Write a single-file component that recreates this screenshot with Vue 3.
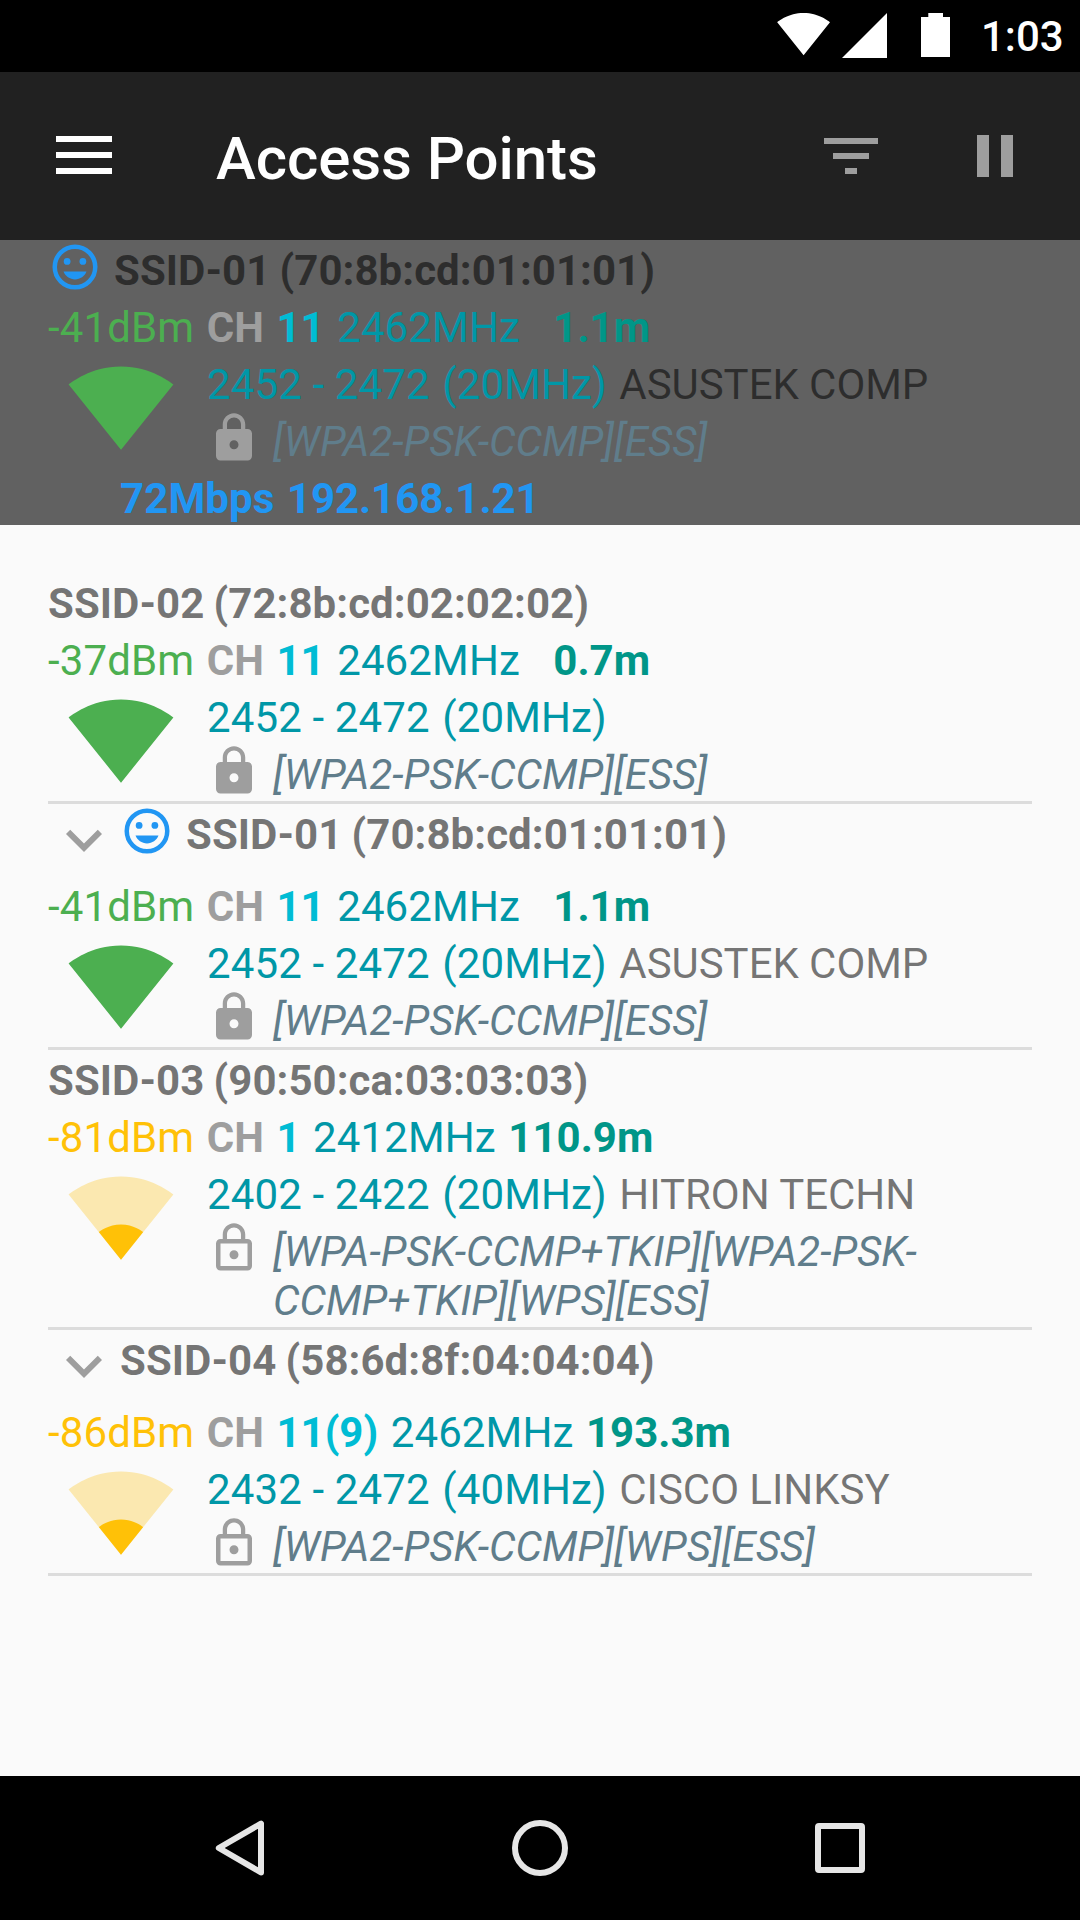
<script setup>
const connected = {
  ssid: 'SSID-01 (70:8b:cd:01:01:01)', mood: true, level: '-41dBm', tone: 'strong',
  channel: '11', freq: '2462MHz', distance: '  1.1m', range: '2452 - 2472', width: '(20MHz)',
  vendor: 'ASUSTEK COMP', caps: '[WPA2-PSK-CCMP][ESS]', locked: true, speed: '72Mbps', ip: '192.168.1.21',
}

const points = [
  {
    ssid: 'SSID-02 (72:8b:cd:02:02:02)', level: '-37dBm', tone: 'strong',
    channel: '11', freq: '2462MHz', distance: '  0.7m', range: '2452 - 2472', width: '(20MHz)',
    vendor: '', caps: '[WPA2-PSK-CCMP][ESS]', locked: true,
  },
  { ...connected, speed: '', ip: '', group: true },
  {
    ssid: 'SSID-03 (90:50:ca:03:03:03)', level: '-81dBm', tone: 'weak',
    channel: '1', freq: '2412MHz', distance: '110.9m', range: '2402 - 2422', width: '(20MHz)',
    vendor: 'HITRON TECHN', caps: '[WPA-PSK-CCMP+TKIP][WPA2-PSK-CCMP+TKIP][WPS][ESS]', locked: false,
  },
  {
    ssid: 'SSID-04 (58:6d:8f:04:04:04)', group: true, level: '-86dBm', tone: 'weak',
    channel: '11(9)', freq: '2462MHz', distance: '193.3m', range: '2432 - 2472', width: '(40MHz)',
    vendor: 'CISCO LINKSY', caps: '[WPA2-PSK-CCMP][WPS][ESS]', locked: false,
  },
]

const sections = [
  { name: 'connected', items: [connected] },
  { name: 'list', items: points },
]

const fan = 'M12.01 21.49L23.64 7c-.45-.34-4.93-4-11.64-4C5.28 3 .81 6.66.36 7l11.63 14.49.01.01.01-.01z'
const lockFull = 'M18 8h-1V6c0-2.76-2.24-5-5-5S7 3.24 7 6v2H6c-1.1 0-2 .9-2 2v10c0 1.1.9 2 2 2h12c1.1 0 2-.9 2-2V10c0-1.1-.9-2-2-2zm-6 9c-1.1 0-2-.9-2-2s.9-2 2-2 2 .9 2 2-.9 2-2 2zm3.1-9H8.9V6c0-1.71 1.39-3.1 3.1-3.1s3.1 1.39 3.1 3.1v2z'
const lockOutline = 'M12 17c1.1 0 2-.9 2-2s-.9-2-2-2-2 .9-2 2 .9 2 2 2zm6-9h-1V6c0-2.76-2.24-5-5-5S7 3.24 7 6v2H6c-1.1 0-2 .9-2 2v10c0 1.1.9 2 2 2h12c1.1 0 2-.9 2-2V10c0-1.1-.9-2-2-2zM8.9 6c0-1.71 1.39-3.1 3.1-3.1s3.1 1.39 3.1 3.1v2H8.9V6zM18 20H6V10h12v10z'
</script>

<template>
  <div class="screen">
    <header class="status">
      <svg class="s-wifi" viewBox="0 0 54 44"><path d="M26.6 43.2L53 10.2C51.9 9.4 41.8 1 26.6 1S1.3 9.4.2 10.2z" fill="#fff" /></svg>
      <svg class="s-cell" viewBox="0 0 45 45"><path d="M0 45H45V0z" fill="#fff" /></svg>
      <svg class="s-batt" viewBox="0 0 29 44"><path d="M7.3 0H22V4H29V44H0V4H7.3z" fill="#fff" /></svg>
      <span class="clock">1:03</span>
    </header>

    <div class="toolbar">
      <svg class="menu" viewBox="0 0 56 38"><path d="M0 0h56v6H0zM0 16h56v6H0zM0 32h56v6H0z" fill="#fff" /></svg>
      <h1>Access Points</h1>
      <svg class="filter" viewBox="0 0 54 36"><path d="M0 0h54v6H0zM9 15h36v6H9zM21 30h12v6H21z" fill="#9e9e9e" /></svg>
      <svg class="pause" viewBox="0 0 36 42"><path d="M0 0h12v42H0zM24 0h12v42H24z" fill="#9e9e9e" /></svg>
    </div>

    <main>
      <section v-for="s in sections" :key="s.name" :class="s.name">
        <article v-for="ap in s.items" :key="ap.ssid" class="ap">
          <div class="title" :class="{ group: ap.group }">
            <svg v-if="ap.group" class="chevron" viewBox="0 0 24 24"><path d="M16.59 8.59L12 13.17 7.41 8.59 6 10l6 6 6-6z" fill="#9e9e9e" /></svg>
            <svg v-if="ap.mood" class="mood" viewBox="0 0 24 24">
              <circle cx="12" cy="12" r="9" fill="none" stroke="#2196f3" stroke-width="2" />
              <circle cx="8.5" cy="9.5" r="1.5" fill="#2196f3" />
              <circle cx="15.5" cy="9.5" r="1.5" fill="#2196f3" />
              <path d="M12 17.5c2.33 0 4.31-1.46 5.11-3.5H6.89c.8 2.04 2.78 3.5 5.11 3.5z" fill="#2196f3" />
            </svg>
            <b class="txt ssid">{{ ap.ssid }}</b>
          </div>
          <div class="signal">
            <span class="txt level" :class="ap.tone">{{ ap.level }}</span>
            <b class="txt ch">CH</b>
            <b class="txt channel">{{ ap.channel }}</b>
            <span class="txt freq">{{ ap.freq }}</span>
            <b class="txt distance">{{ ap.distance }}</b>
          </div>
          <div class="detail">
            <svg class="fan" :class="ap.tone" viewBox="0 0 24 24">
              <path :d="fan" fill="currentColor" :fill-opacity="ap.tone === 'weak' ? 0.3 : 1" />
              <path v-if="ap.tone === 'weak'" d="M7.07 15.36L12 21.5l4.93-6.14C16.66 15.15 14.8 13.67 12 13.67s-4.66 1.48-4.93 1.69z" fill="currentColor" />
            </svg>
            <div class="info">
              <div class="range">
                <span class="txt freq">{{ ap.range }}</span>
                <span class="txt freq">{{ ap.width }}</span>
                <span v-if="ap.vendor" class="txt vendor">{{ ap.vendor }}</span>
              </div>
              <div class="security">
                <svg class="lock" viewBox="0 0 24 24"><path :d="ap.locked ? lockFull : lockOutline" fill="#9e9e9e" /></svg>
                <i class="txt caps">{{ ap.caps }}</i>
              </div>
            </div>
          </div>
          <div v-if="ap.ip" class="link">
            <b class="txt speed">{{ ap.speed }}</b>
            <b class="txt ip">{{ ap.ip }}</b>
          </div>
        </article>
      </section>
    </main>

    <nav>
      <svg viewBox="0 0 56 56"><path d="M49 3.6V52.4L6.8 28z" fill="none" stroke="#e6e6e6" stroke-width="6" stroke-linejoin="round" /></svg>
      <svg viewBox="0 0 56 56"><circle cx="28" cy="28" r="25" fill="none" stroke="#e6e6e6" stroke-width="6" /></svg>
      <svg viewBox="0 0 56 56"><rect x="6" y="6" width="44" height="44" rx="1" fill="none" stroke="#e6e6e6" stroke-width="6" stroke-linejoin="round" /></svg>
    </nav>
  </div>
</template>

<style>
body { margin: 0; background: #000; }
</style>

<style scoped>
.screen {
  width: 1080px;
  height: 1920px;
  display: flex;
  flex-direction: column;
  background: #fafafa;
  font-family: Roboto, "Noto Sans", sans-serif;
  font-size: 42px;
  line-height: 49px;
  overflow: hidden;
}
svg { display: block; flex: none; }
.status {
  height: 72px;
  flex: none;
  background: #000;
  color: #fff;
  display: flex;
  box-sizing: border-box;
  padding: 12px 0 0 777px;
}
.s-wifi { width: 54px; height: 44px; }
.s-cell { width: 45px; height: 45px; margin: 1px 0 0 11px; }
.s-batt { width: 29px; height: 44px; margin: 1px 0 0 34px; }
.clock { font-weight: 500; margin-left: 31px; }
.toolbar {
  height: 168px;
  flex: none;
  box-sizing: border-box;
  padding: 0 67px 0 56px;
  background: #212121;
  color: #fff;
  display: flex;
  align-items: center;
}
.menu { width: 56px; height: 38px; margin-top: -2px; }
h1 { flex: 1; margin: 5px 0 0 104px; font-size: 60px; line-height: 70px; font-weight: 500; letter-spacing: -0.08px; }
.filter { width: 54px; height: 36px; }
.pause { width: 36px; height: 42px; margin-left: 99px; }
main { flex: 1; }
.connected { background: #616161; padding: 0 48px; }
.list { padding: 48px 48px 0; }
.list .ap { border-bottom: 3px solid #dcdcdc; }
.txt { display: block; padding: 6px 0 2px; white-space: pre; }
.title { display: flex; height: 57px; color: rgba(0, 0, 0, 0.54); }
.title.group { height: 72px; }
.ssid { word-spacing: -1.2px; letter-spacing: 0.04px; }
.chevron { width: 72px; height: 72px; }
.mood { width: 54px; height: 54px; margin-right: 12px; }
.signal, .range, .link { display: flex; gap: 12.5px; }
.level, .freq { letter-spacing: 0.13px; }
.strong { color: #4caf50; }
.weak { color: #ffc107; }
.ch { color: #9e9e9e; }
.channel { color: #00bcd4; }
.freq { color: #0097a7; }
.distance { color: #009688; }
.vendor { color: rgba(0, 0, 0, 0.54); letter-spacing: -0.05px; }
.detail { display: flex; }
.fan { width: 108px; height: 108px; margin: -1px 32px 0 19px; }
.info { flex: 1; }
.security { display: flex; }
.lock { width: 54px; height: 54px; margin-right: 12px; }
.caps { flex: 1; color: #607d8b; white-space: normal; }
.link { color: #2196f3; margin-left: 72px; }
.speed { letter-spacing: 0.1px; }
.ip { letter-spacing: -0.06px; }
nav {
  height: 144px;
  flex: none;
  background: #000;
  display: flex;
  align-items: center;
  justify-content: center;
  gap: 244px;
}
nav svg { width: 56px; height: 56px; }
</style>
